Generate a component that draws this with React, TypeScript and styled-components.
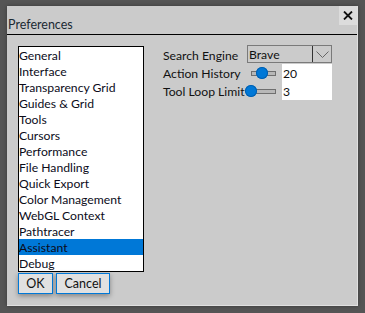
import styled, { createGlobalStyle } from "styled-components";

const GlobalStyle = createGlobalStyle`
  html, body {
    margin: 0;
    padding: 0;
    background: #555555;
  }
  body {
    font-family: Lato, "Noto Sans", sans-serif;
    font-size: 12px;
    color: #111;
  }
`;

const categories = [
  "General",
  "Interface",
  "Transparency Grid",
  "Guides & Grid",
  "Tools",
  "Cursors",
  "Performance",
  "File Handling",
  "Quick Export",
  "Color Management",
  "WebGL Context",
  "Pathtracer",
  "Assistant",
  "Debug",
];

const Screen = styled.div`
  width: 365px;
  height: 313px;
  padding: 6px 0 0 7px;
  box-sizing: border-box;
`;

const Dialog = styled.div`
  width: 351px;
  height: 300px;
  box-sizing: border-box;
  background: #cbcbcb;
  border-right: 1px solid #e0e0e0;
  border-bottom: 1px solid #e0e0e0;
  box-shadow: 0 0 4px rgba(0, 0, 0, 0.35);
  display: flex;
  flex-direction: column;
`;

const TitleBar = styled.div`
  height: 28px;
  border-bottom: 1px solid #000;
  display: flex;
  justify-content: space-between;
  align-items: flex-start;
`;

const Title = styled.div`
  padding: 11px 0 0 1px;
  font-size: 12.5px;
  line-height: 16px;
  color: #1b2a33;
`;

const CloseButton = styled.button`
  width: 18px;
  height: 19px;
  margin: 0;
  padding: 0;
  border: none;
  background: #dcdcdc;
  display: flex;
  align-items: center;
  justify-content: center;
`;

const Body = styled.div`
  display: flex;
  padding: 11px 0 0 11px;
  gap: 19px;
`;

const LeftColumn = styled.div`
  display: flex;
  flex-direction: column;
`;

const List = styled.div`
  width: 126px;
  box-sizing: border-box;
  border: 1px solid #000;
  background: #fff;
`;

const ListItem = styled.div<{ $selected?: boolean }>`
  height: 16px;
  line-height: 17px;
  font-size: 12.2px;
  white-space: nowrap;
  color: #0c0c1a;
  background: ${(p) => (p.$selected ? "#0078d7" : "transparent")};
`;

const ButtonRow = styled.div`
  display: flex;
  gap: 3px;
  margin-top: 1px;
`;

const Button = styled.button<{ $w: number }>`
  width: ${(p) => p.$w}px;
  height: 21px;
  box-sizing: border-box;
  border: 1px solid #0078d7;
  background: #e1e1e1;
  box-shadow: 0 2px 5px rgba(0, 0, 0, 0.35);
  font-family: inherit;
  font-size: 12.5px;
  color: #111;
  padding: 0;
`;

const Panel = styled.div`
  display: grid;
  grid-template-columns: 84px 85px;
  grid-auto-rows: 18px;
  align-items: center;
`;

const Label = styled.div`
  font-size: 12.2px;
  white-space: nowrap;
  line-height: 19px;
`;

const Select = styled.div`
  height: 18px;
  box-sizing: border-box;
  border: 1px solid #7a7a7a;
  display: flex;
  align-items: stretch;
  margin-bottom: 2px;
`;

const SelectValue = styled.div`
  flex: 1;
  padding-left: 1px;
  line-height: 17px;
  font-size: 12.2px;
  border-right: 1px solid #333;
`;

const SelectArrow = styled.div`
  width: 18px;
  display: flex;
  align-items: center;
  justify-content: center;
`;

const ControlCell = styled.div`
  display: flex;
  align-items: center;
  gap: 6px;
  padding-left: 4px;
`;

const Slider = styled.div`
  position: relative;
  width: 25px;
  height: 18px;
  display: flex;
  align-items: center;
`;

const Track = styled.div`
  width: 100%;
  height: 5px;
  box-sizing: border-box;
  background: #b8b8b8;
  border: 1px solid #6f6f6f;
`;

const Thumb = styled.div`
  position: absolute;
  top: 3px;
  width: 12px;
  height: 12px;
  margin-left: -6px;
  border-radius: 50%;
  background: #0078d7;
  box-shadow: inset 0 0 0 1px #005fb0;
`;

const NumberBox = styled.div`
  width: 50px;
  height: 18px;
  background: #fff;
  line-height: 19px;
  font-size: 12.2px;
  padding-left: 1px;
  box-sizing: border-box;
`;

const Range = ({ value, min, max }: { value: number; min: number; max: number }) => (
  <Slider>
    <Track />
    <Thumb style={{ left: `${((value - min) / (max - min)) * 100}%` }} />
  </Slider>
);

export default function App() {
  return (
    <Screen>
      <GlobalStyle />
      <Dialog>
        <TitleBar>
          <Title>Preferences</Title>
          <CloseButton aria-label="Close">
            <svg width="10" height="9" viewBox="0 0 10 9">
              <path d="M1 0.5 L9 8.5 M9 0.5 L1 8.5" stroke="#111" strokeWidth="1.8" />
            </svg>
          </CloseButton>
        </TitleBar>
        <Body>
          <LeftColumn>
            <List>
              {categories.map((c) => (
                <ListItem key={c} $selected={c === "Assistant"}>
                  {c}
                </ListItem>
              ))}
            </List>
            <ButtonRow>
              <Button $w={35}>OK</Button>
              <Button $w={54}>Cancel</Button>
            </ButtonRow>
          </LeftColumn>
          <Panel>
            <Label>Search Engine</Label>
            <Select>
              <SelectValue>Brave</SelectValue>
              <SelectArrow>
                <svg width="13" height="7" viewBox="0 0 13 7">
                  <path d="M0.5 0.5 L6.5 6.5 L12.5 0.5" fill="none" stroke="#666" strokeWidth="1" />
                </svg>
              </SelectArrow>
            </Select>
            <Label>Action History</Label>
            <ControlCell>
              <Range value={20} min={0} max={45} />
              <NumberBox>20</NumberBox>
            </ControlCell>
            <Label>Tool Loop Limit</Label>
            <ControlCell>
              <Range value={3} min={3} max={20} />
              <NumberBox>3</NumberBox>
            </ControlCell>
          </Panel>
        </Body>
      </Dialog>
    </Screen>
  );
}
